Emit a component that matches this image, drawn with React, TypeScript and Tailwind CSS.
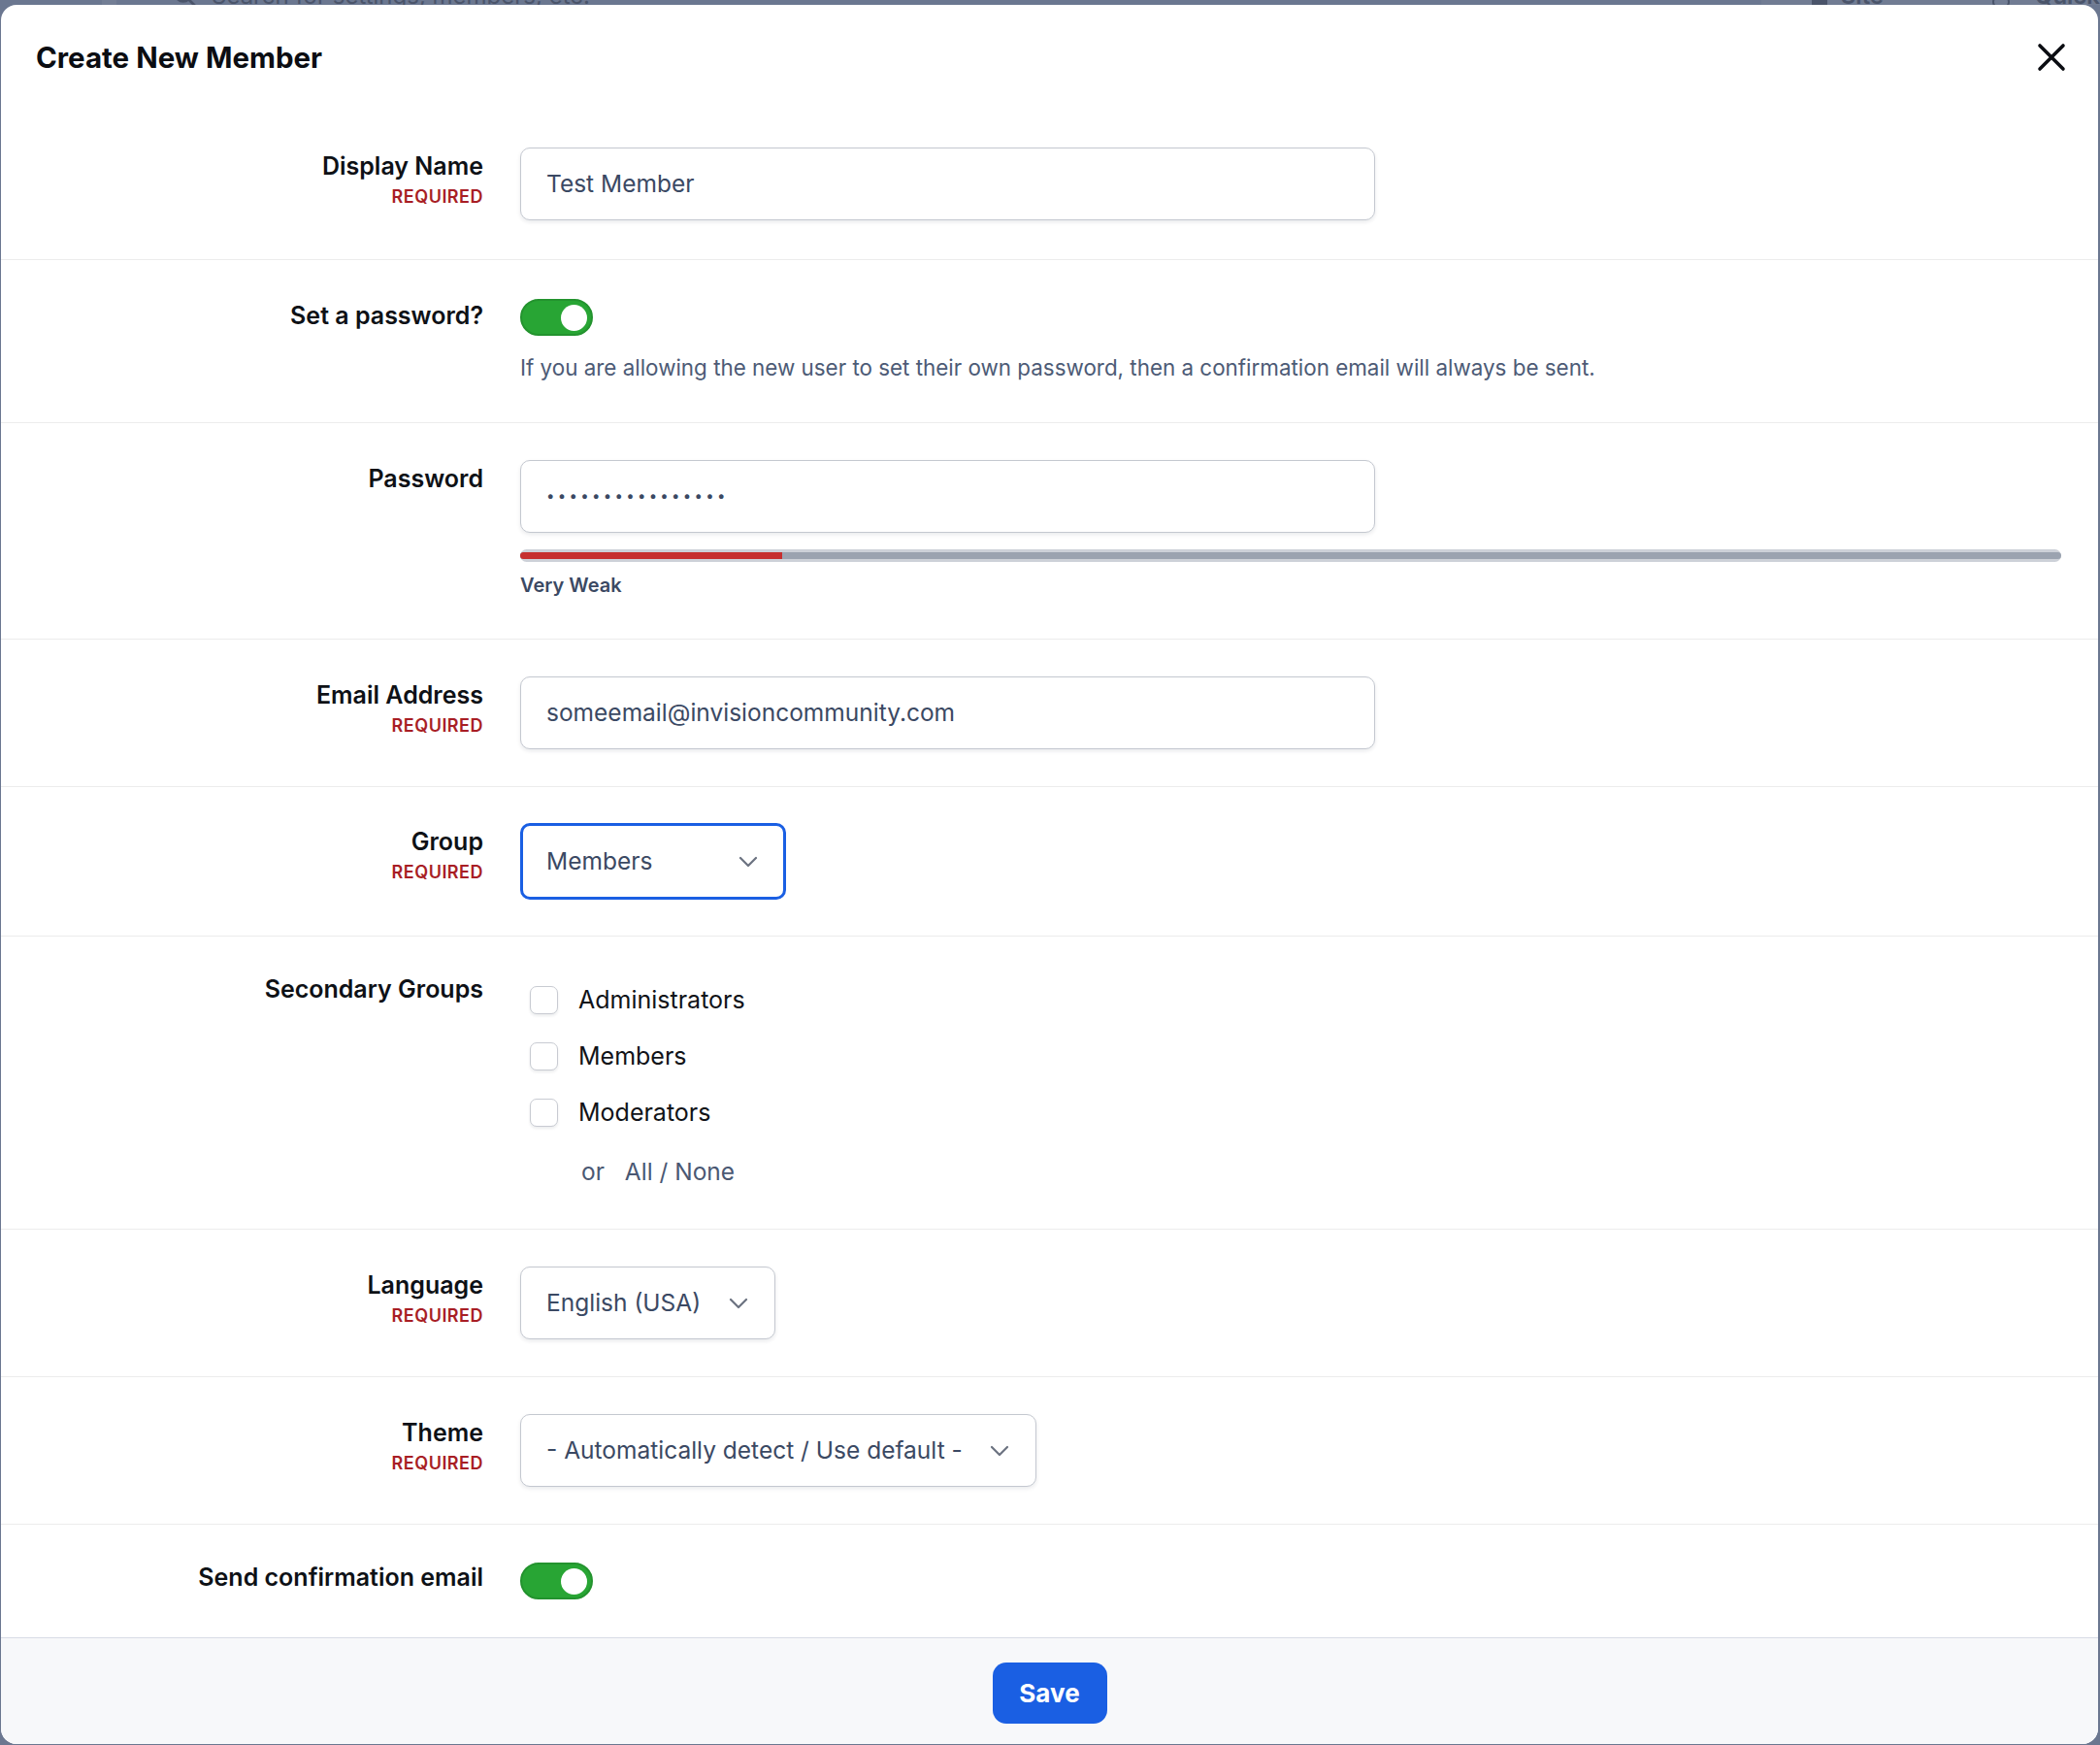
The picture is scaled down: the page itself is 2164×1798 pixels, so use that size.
import React from 'react';

const Chevron = () => (
  <svg width="20" height="12" viewBox="0 0 20 12" fill="none" className="shrink-0">
    <path d="M2 2l8 8 8-8" stroke="#6b7280" strokeWidth="2.2" strokeLinecap="round" strokeLinejoin="round" />
  </svg>
);

const Toggle = () => (
  <div className="w-[75px] h-[38px] rounded-full bg-[#28a534] border-2 border-[#23932e] flex items-center justify-end pr-[4px]">
    <div className="w-[27px] h-[27px] rounded-full bg-white" />
  </div>
);

const Required = () => (
  <div className="mt-[7px] text-[18px] leading-[20px] font-semibold tracking-[0.5px] text-[#a81e25]">REQUIRED</div>
);

interface RowProps {
  label: string;
  required?: boolean;
  labelPad?: string;
  children: React.ReactNode;
  className?: string;
}

const Row: React.FC<RowProps> = ({ label, required, labelPad = 'pt-[4px]', children, className = '' }) => (
  <div className={`flex border-b border-[#ececec] pr-[38px] ${className}`}>
    <div className={`w-[497px] shrink-0 text-right ${labelPad}`}>
      <div className="text-[25px] leading-[30px] font-semibold text-[#0e1116]">{label}</div>
      {required && <Required />}
    </div>
    <div className="ml-[38px] flex-1 min-w-0">{children}</div>
  </div>
);

const TextBox = ({ children }: { children: React.ReactNode }) => (
  <div className="w-[881px] h-[75px] rounded-[10px] border border-[#c4c8d0] bg-white px-[26px] flex items-center text-[24.5px] text-[#3b4963] shadow-[0_2px_4px_rgba(15,23,42,0.09)]">
    {children}
  </div>
);

const Select = ({ value, width, focused }: { value: string; width: string; focused?: boolean }) => (
  <div
    className={`${width} rounded-[10px] bg-white flex items-center justify-between text-[24.5px] text-[#3b4963] ${
      focused
        ? 'h-[79px] border-[3px] border-[#1a5fe3] pl-[24px] pr-[26px]'
        : 'h-[75px] border border-[#c4c8d0] pl-[26px] pr-[27px] shadow-[0_2px_4px_rgba(15,23,42,0.09)]'
    }`}
  >
    <span>{value}</span>
    <Chevron />
  </div>
);

const Checkbox = ({ label }: { label: string }) => (
  <div className="flex items-center h-[30px]">
    <div className="ml-[10px] w-[29px] h-[29px] rounded-[7px] border border-[#c8cbd2] bg-white shadow-[0_2px_3px_rgba(15,23,42,0.08)]" />
    <span className="ml-[21px] text-[25px] leading-[30px] text-[#111318]">{label}</span>
  </div>
);

export default function App() {
  return (
    <div className="relative w-[2164px] h-[1798px] overflow-hidden bg-[#6b7790] font-[Inter,'Liberation_Sans',sans-serif]">
      {/* admin bar behind the overlay */}
      <div className="h-[5px] overflow-hidden flex items-end text-[24px] leading-[26px] text-[#4a546a]">
        <div className="w-[105px] h-[26px] mb-[-4px]" />
        <div className="w-[15px] h-[26px] bg-[#737e95] mb-[-4px]" />
        <svg className="ml-[58px] mb-[-4px]" width="26" height="26" viewBox="0 0 24 24" fill="none" stroke="#4a546a" strokeWidth="2.5">
          <circle cx="10" cy="10" r="7" />
          <path d="M15 15l6 6" />
        </svg>
        <span className="ml-[14px] mb-[-4px]">Search for settings, members, etc.</span>
        <div className="ml-auto w-[349px] h-[26px] bg-[#717c93] flex items-end mb-[-4px]">
          <span className="ml-[52px] w-[16px] h-[20px] bg-[#4a546a]" />
          <span className="ml-[14px] font-semibold">Visit Site</span>
          <span className="ml-[56px] w-[18px] h-[14px] border-2 border-[#4a546a] rounded-full" />
          <span className="ml-[26px] font-semibold">Quick</span>
        </div>
      </div>

      <div className="absolute top-[5px] left-[1px] right-[2px] bottom-[1px] rounded-[16px] bg-white flex flex-col overflow-hidden">
        <div className="h-[108px] shrink-0 flex items-center justify-between pl-[36px] pr-[33px]">
          <h1 className="text-[29.5px] leading-[34px] font-bold text-[#0b0d12]">Create New Member</h1>
          <svg width="30" height="30" viewBox="0 0 30 30" fill="none">
            <path d="M3 3l24 24M27 3L3 27" stroke="#0b0d12" strokeWidth="3.6" strokeLinecap="round" />
          </svg>
        </div>

        <Row label="Display Name" required className="pt-[39px] pb-[40px]">
          <TextBox>Test Member</TextBox>
        </Row>

        <Row label="Set a password?" labelPad="pt-[2px]" className="pt-[40px] pb-[41px]">
          <Toggle />
          <p className="mt-[18px] text-[22.4px] leading-[30px] text-[#4d5b76]">
            If you are allowing the new user to set their own password, then a confirmation email will always be sent.
          </p>
        </Row>

        <Row label="Password" className="pt-[38px] pb-[43px]">
          <TextBox>
            <span className="text-[15px] tracking-[3.3px] text-[#3b4963]">••••••••••••••••</span>
          </TextBox>
          <div className="mt-[17px] h-[13px] rounded-full bg-[#cdd1d8] pt-[3px] pb-[3px]">
            <div className="h-[7px] rounded-full bg-[#9ba3b0] flex">
              <div className="w-[270px] h-[7px] rounded-l-full bg-[#c62f2f]" />
            </div>
          </div>
          <div className="mt-[12px] text-[20px] leading-[24px] font-semibold text-[#3b4963]">Very Weak</div>
        </Row>

        <Row label="Email Address" required className="py-[38px]">
          <TextBox>someemail@invisioncommunity.com</TextBox>
        </Row>

        <Row label="Group" required className="pt-[37px] pb-[37px]">
          <Select value="Members" width="w-[274px]" focused />
        </Row>

        <Row label="Secondary Groups" labelPad="pt-0" className="pt-[39px] pb-[44px]">
          <div className="pt-[11px] flex flex-col gap-[28px]">
            <Checkbox label="Administrators" />
            <Checkbox label="Members" />
            <Checkbox label="Moderators" />
          </div>
          <div className="mt-[31px] ml-[63px] text-[24.5px] leading-[30px] text-[#4a5873]">
            or <span className="ml-[14px]">All / None</span>
          </div>
        </Row>

        <Row label="Language" required className="py-[38px]">
          <Select value="English (USA)" width="w-[263px]" />
        </Row>

        <Row label="Theme" required className="py-[38px]">
          <Select value="- Automatically detect / Use default -" width="w-[532px]" />
        </Row>

        <Row label="Send confirmation email" labelPad="pt-[0px]" className="pt-[39px] pb-[39px] border-b-0">
          <Toggle />
        </Row>

        <div className="flex-1 border-t border-[#d8dce6] bg-[#f7f8fa] flex justify-center pt-[25px]">
          <button className="w-[118px] h-[63px] rounded-[14px] bg-[#1a5fe3] text-white text-[26px] font-bold">Save</button>
        </div>
      </div>
    </div>
  );
}
